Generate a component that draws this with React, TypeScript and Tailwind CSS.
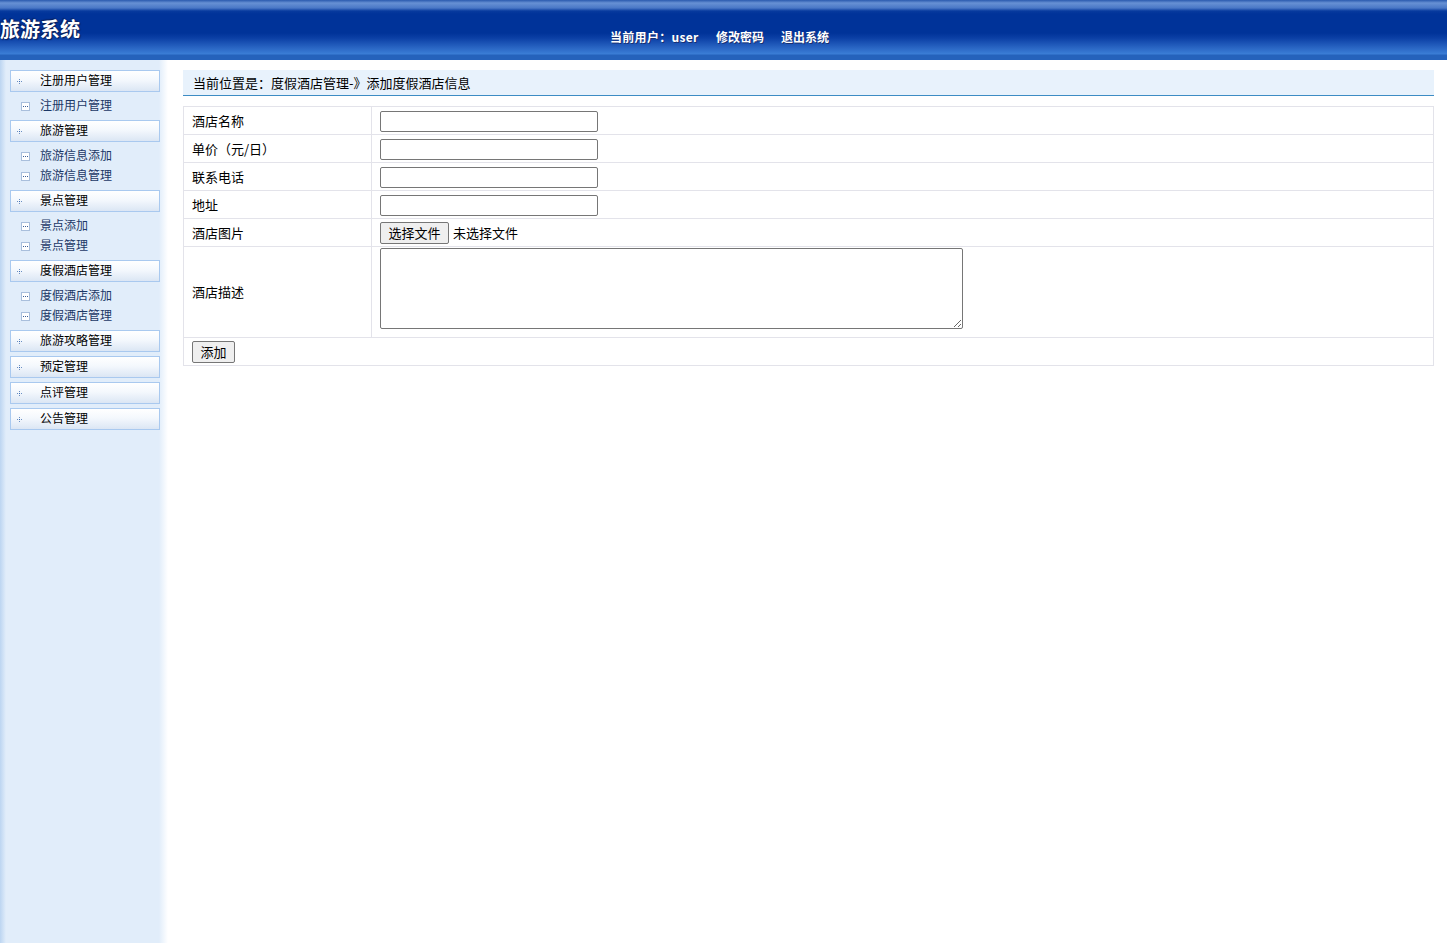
import React from "react";

const font = { fontFamily: '"Noto Sans CJK SC", "Noto Sans", sans-serif' };

type Group = { title: string; items: string[] };
const groups: Group[] = [
  { title: "注册用户管理", items: ["注册用户管理"] },
  { title: "旅游管理", items: ["旅游信息添加", "旅游信息管理"] },
  { title: "景点管理", items: ["景点添加", "景点管理"] },
  { title: "度假酒店管理", items: ["度假酒店添加", "度假酒店管理"] },
  { title: "旅游攻略管理", items: [] },
  { title: "预定管理", items: [] },
  { title: "点评管理", items: [] },
  { title: "公告管理", items: [] },
];

function DotIcon() {
  return (
    <svg width="5" height="5" viewBox="0 0 5 5" className="shrink-0">
      <rect x="2" y="0" width="1" height="1" fill="#6a8fc4" />
      <rect x="0" y="2" width="1" height="1" fill="#6a8fc4" />
      <rect x="2" y="2" width="1" height="1" fill="#3a6ab0" />
      <rect x="4" y="2" width="1" height="1" fill="#6a8fc4" />
      <rect x="2" y="4" width="1" height="1" fill="#6a8fc4" />
    </svg>
  );
}

function BoxIcon() {
  return (
    <svg width="9" height="9" viewBox="0 0 9 9" className="shrink-0">
      <rect x="0.5" y="0.5" width="8" height="8" fill="#fff" stroke="#a9bfdc" />
      <rect x="2" y="4" width="1" height="1" fill="#3c5f96" />
      <rect x="4" y="4" width="1" height="1" fill="#3c5f96" />
      <rect x="6" y="4" width="1" height="1" fill="#3c5f96" />
    </svg>
  );
}

function Sidebar() {
  return (
    <div className="w-[168px] shrink-0 min-h-[883px] pt-[10px] bg-[linear-gradient(to_right,#bcd5f1_0px,#e1edfa_6px,#e1edfa_159px,#ffffff_168px)]">
      {groups.map((g) => (
        <div key={g.title}>
          <div className="ml-[10px] w-[150px] h-[22px] mb-[4px] border border-[#a9c9ef] bg-[linear-gradient(to_bottom,#ffffff_0%,#f4f8fd_45%,#dbe6f4_100%)] flex items-center">
            <div className="w-[29px] pl-[6px] flex items-center">
              <DotIcon />
            </div>
            <span className="text-[12px] leading-none text-black -mt-[2px]" style={font}>
              {g.title}
            </span>
          </div>
          {g.items.length > 0 && (
            <div className="pb-[4px]">
              {g.items.map((it) => (
                <div key={it} className="h-[20px] flex items-center pl-[21px]">
                  <div className="w-[19px] flex items-center">
                    <BoxIcon />
                  </div>
                  <span className="text-[12px] leading-none text-[#1b3866] -mt-[2px]" style={font}>
                    {it}
                  </span>
                </div>
              ))}
            </div>
          )}
        </div>
      ))}
    </div>
  );
}

function Input() {
  return (
    <input
      type="text"
      className="w-[218px] h-[21px] mt-[2px] border border-[#767676] rounded-[2px] bg-white block"
    />
  );
}

export default function App() {
  const rowCls = "border border-[#e3e3ea]";
  const labelCls = "border border-[#e3e3ea] w-[188px] pl-[8px] text-[13px] text-black align-middle";
  const cellCls = "border border-[#e3e3ea] pl-[8px] align-middle";
  return (
    <div className="w-[1447px] min-h-[943px] bg-white" style={font}>
      <div className="h-[60px] flex items-center relative bg-[linear-gradient(to_bottom,#2a5aae_0px,#6791d4_3px,#4a78c6_8px,#073a9e_11px,#003399_14px,#003399_33px,#0b3fa5_38px,#2a66c4_48px,#3b7ed6_54px,#2562bb_55px,#2562bb_60px)]">
        <div
          className="absolute left-0 top-[16px] text-[20px] font-bold text-white leading-[26px] [text-shadow:1px_1px_1px_#0a1f5a,-1px_-1px_1px_#0a1f5a]"
          style={font}
        >
          旅游系统
        </div>
        <div className="absolute left-[610px] top-[29px] flex text-[12px] font-bold text-white leading-[16px] [text-shadow:1px_1px_0_#1a2f70]" style={font}>
          <span className="w-[90px] whitespace-nowrap tracking-[0.3px]">当前用户：user</span>
          <span className="ml-[16px]">修改密码</span>
          <span className="ml-[17px]">退出系统</span>
        </div>
      </div>
      <div className="flex">
        <Sidebar />
        <div className="flex-1 pl-[15px] pr-[13px] pt-[10px]">
          <div className="h-[26px] bg-[#e8f2fc] border-b border-[#3d8cc4] pl-[10px] flex items-center text-[13px] text-black">
            当前位置是：度假酒店管理-》添加度假酒店信息
          </div>
          <table className="mt-[10px] w-full border-collapse border border-[#e3e3ea] text-[13px]">
            <tbody>
              <tr className={rowCls}>
                <td className={labelCls + " h-[28px]"}>酒店名称</td>
                <td className={cellCls}><Input /></td>
              </tr>
              <tr className={rowCls}>
                <td className={labelCls + " h-[28px]"}>单价（元/日）</td>
                <td className={cellCls}><Input /></td>
              </tr>
              <tr className={rowCls}>
                <td className={labelCls + " h-[28px]"}>联系电话</td>
                <td className={cellCls}><Input /></td>
              </tr>
              <tr className={rowCls}>
                <td className={labelCls + " h-[28px]"}>地址</td>
                <td className={cellCls}><Input /></td>
              </tr>
              <tr className={rowCls}>
                <td className={labelCls + " h-[28px]"}>酒店图片</td>
                <td className={cellCls}>
                  <div className="flex items-center text-[13px] text-black">
                    <button className="w-[69px] h-[22px] border border-[#767676] rounded-[2px] bg-[#efefef] text-[13px] leading-none">
                      选择文件
                    </button>
                    <span className="ml-[4px]">未选择文件</span>
                  </div>
                </td>
              </tr>
              <tr className={rowCls}>
                <td className={labelCls + " h-[91px]"}>酒店描述</td>
                <td className="border border-[#e3e3ea] pl-[8px] pt-[1px] align-top">
                  <textarea className="block w-[583px] h-[81px] border border-[#767676] rounded-[2px] bg-white" />
                </td>
              </tr>
              <tr className={rowCls}>
                <td colSpan={2} className="border border-[#e3e3ea] h-[28px] pl-[8px] align-middle">
                  <button className="w-[43px] h-[22px] border border-[#767676] rounded-[2px] bg-[#efefef] text-[13px] leading-none text-black block">
                    添加
                  </button>
                </td>
              </tr>
            </tbody>
          </table>
        </div>
      </div>
    </div>
  );
}
